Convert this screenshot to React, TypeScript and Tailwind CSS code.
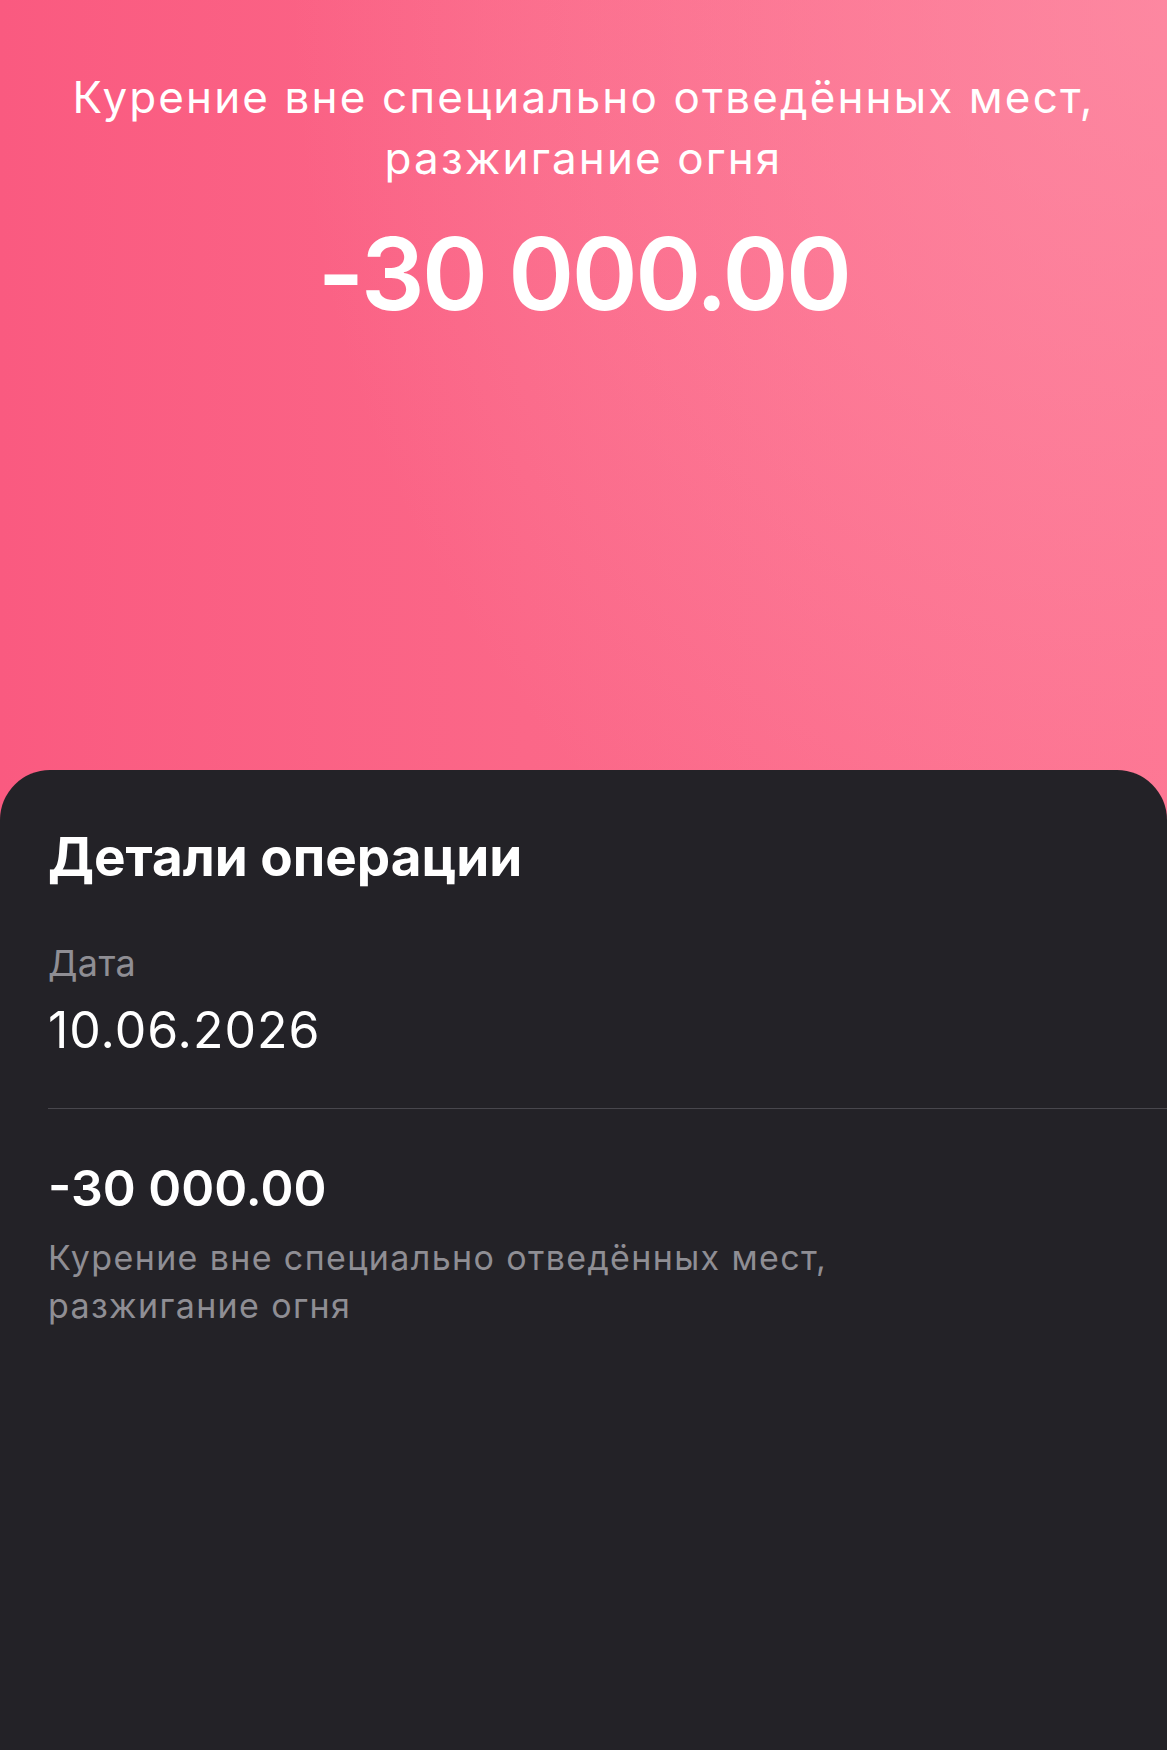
import React from 'react';

const fine = 'Курение вне специально отведённых мест, разжигание огня';

export default function App() {
  return (
    <div
      className="min-h-[1750px] w-full flex flex-col bg-[radial-gradient(ellipse_75%_60%_at_100%_0%,rgba(253,150,172,0.6),rgba(253,150,172,0)_100%),linear-gradient(90deg,#fa5a80_0%,#fb6788_45%,#fd7290_100%)]"
      style={{ fontFamily: 'Inter, "Noto Sans", sans-serif' }}
    >
      {/* Header */}
      <section className="h-[770px] flex flex-col items-center pt-[67px] px-6 text-white">
        <p className="text-center text-[44px] leading-[61px] font-normal tracking-[0.048em] whitespace-nowrap">
          Курение вне специально отведённых мест,
          <br />
          разжигание огня
        </p>
        <p className="mt-[33px] text-[100px] leading-[104px] font-semibold tracking-tight">
          -30 000.00
        </p>
      </section>

      {/* Details panel */}
      <section className="flex-1 bg-[#232227] rounded-t-[50px] pt-[55px] pl-12 pb-20">
        <h2 className="text-white text-[53px] leading-[64px] font-bold">
          Детали операции
        </h2>

        <div className="mt-[52px]">
          <p className="text-[36px] leading-[44px] text-[#8f8e94] tracking-[0.01em]">Дата</p>
          <p className="mt-[15px] text-[50px] leading-[60px] text-white tracking-[0.02em]">
            10.06.2026
          </p>
        </div>

        <div className="mt-[48px] h-px bg-[#48474d]" />

        <div className="mt-[49px]">
          <p className="text-[50px] leading-[60px] font-semibold text-white">-30 000.00</p>
          <p className="mt-4 text-[34px] leading-[48px] text-[#8f8e94] tracking-[0.04em] max-w-[860px]">
            {fine}
          </p>
        </div>
      </section>
    </div>
  );
}
